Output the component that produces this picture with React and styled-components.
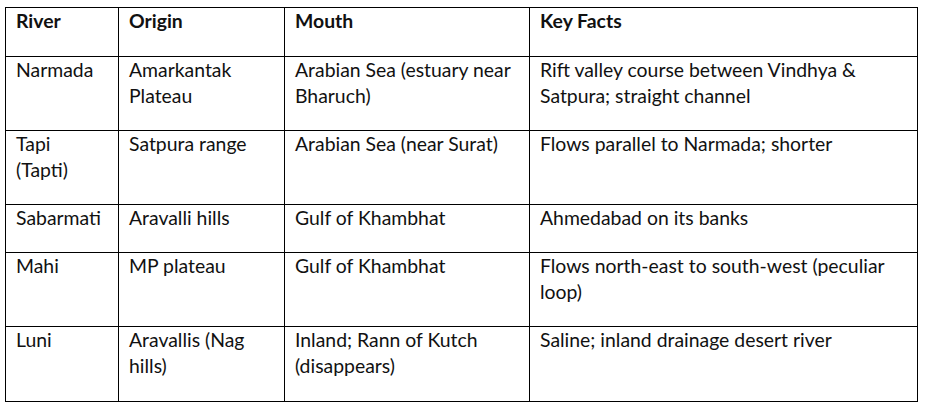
import React from "react";
import styled, { createGlobalStyle } from "styled-components";

const Global = createGlobalStyle`
  html, body { margin: 0; padding: 0; background: #fff; }
  body { font-family: Lato, "Liberation Sans", sans-serif; }
`;

const Page = styled.div`
  padding: 7px 0 0 5px;
`;

const Table = styled.table`
  border-collapse: collapse;
  table-layout: fixed;
  width: 912px;
  color: #111;
  font-size: 19.4px;
  line-height: 26px;

  tr:last-child td {
    padding-bottom: 22px;
  }
`;

const Cell = styled.td`
  border: 1px solid #000;
  padding: 0 6px ${(p) => (p.$head ? 22 : 21)}px 10px;
  vertical-align: top;
  white-space: nowrap;
  font-weight: ${(p) => (p.$head ? 700 : 400)};
`;

const widths = [113, 166, 245, 388];

const head = ["River", "Origin", "Mouth", "Key Facts"];
const rows = [
  [["Narmada"], ["Amarkantak", "Plateau"], ["Arabian Sea (estuary near", "Bharuch)"], ["Rift valley course between Vindhya &", "Satpura; straight channel"]],
  [["Tapi", "(Tapti)"], ["Satpura range"], ["Arabian Sea (near Surat)"], ["Flows parallel to Narmada; shorter"]],
  [["Sabarmati"], ["Aravalli hills"], ["Gulf of Khambhat"], ["Ahmedabad on its banks"]],
  [["Mahi"], ["MP plateau"], ["Gulf of Khambhat"], ["Flows north-east to south-west (peculiar", "loop)"]],
  [["Luni"], ["Aravallis (Nag", "hills)"], ["Inland; Rann of Kutch", "(disappears)"], ["Saline; inland drainage desert river"]],
];

const Lines = ({ lines }) =>
  lines.map((l, i) => (
    <React.Fragment key={i}>
      {i > 0 && <br />}
      {l}
    </React.Fragment>
  ));

export default function App() {
  return (
    <>
      <Global />
      <Page>
        <Table>
          <colgroup>
            {widths.map((w, i) => (
              <col key={i} style={{ width: w }} />
            ))}
          </colgroup>
          <tbody>
            <tr>
              {head.map((h) => (
                <Cell key={h} $head>
                  {h}
                </Cell>
              ))}
            </tr>
            {rows.map((r, i) => (
              <tr key={i}>
                {r.map((c, j) => (
                  <Cell key={j}>
                    <Lines lines={c} />
                  </Cell>
                ))}
              </tr>
            ))}
          </tbody>
        </Table>
      </Page>
    </>
  );
}
